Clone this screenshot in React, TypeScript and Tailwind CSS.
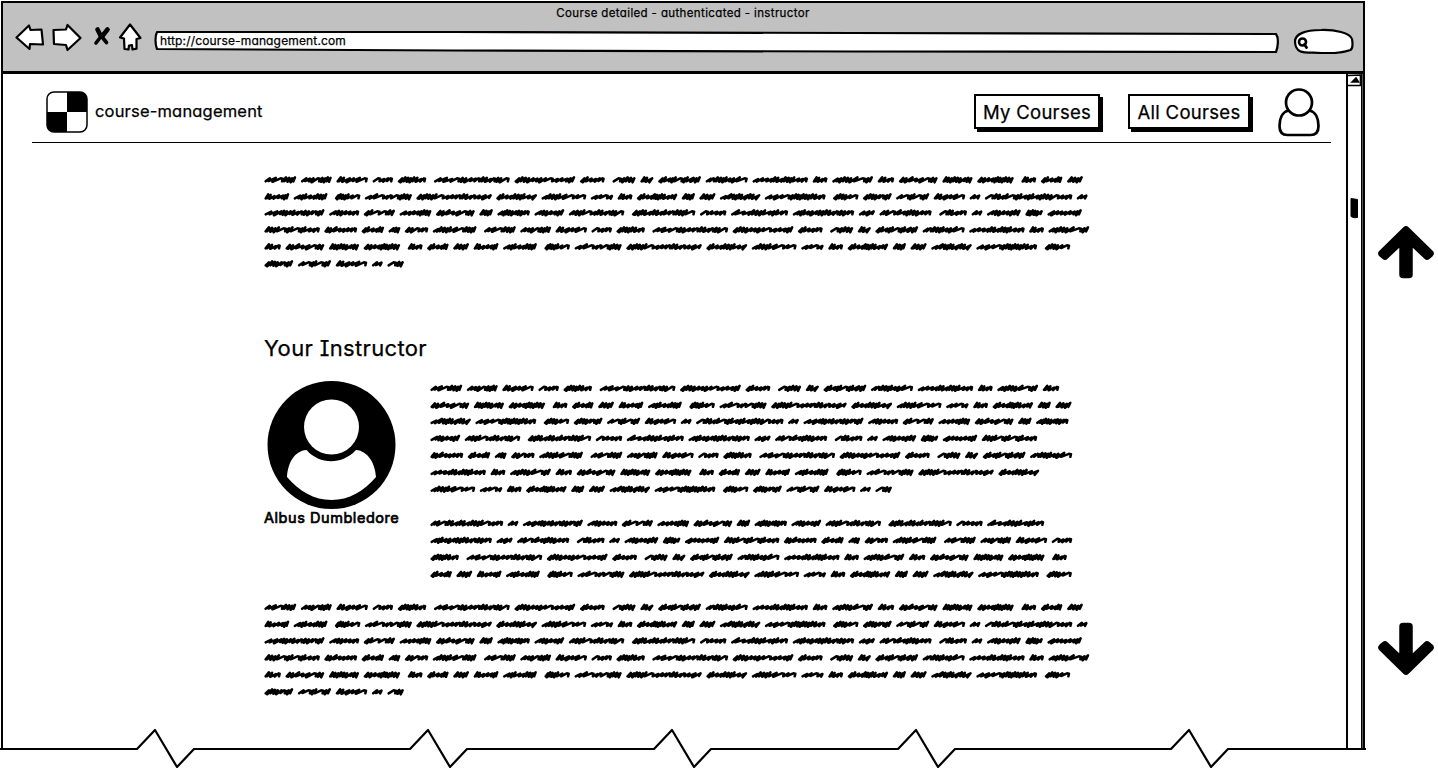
import React from "react";

const HAND = "font-['Inter',sans-serif] [font-feature-settings:'cv11','cv08','ss03'] [-webkit-text-stroke:0.25px_#000]";
const HAND_BOLD = "font-['Inter',sans-serif] [font-feature-settings:'cv11','cv08','ss03'] [-webkit-text-stroke:0.7px_#000]";

/* Word lengths of the scribble face, in thirds of a pixel. */
const WORD: Record<string, number> = {
  lorem: 96, ipsum: 93, dolor: 95, sit: 62, amet: 86, consectetur: 228, adipiscing: 183, elit: 75,
  sed: 70, do: 40, eiusmod: 129, tempor: 127, incididunt: 167, ut: 45, labore: 123, et: 50,
  dolore: 117, magna: 91, aliqua: 110, enim: 65, ad: 48, minim: 75, veniam: 102, quis: 77,
  nostrud: 142, exercitation: 227, ullamco: 123, laboris: 135, nisi: 68, aliquip: 122, ex: 40,
  ea: 49, commodo: 122, consequat: 183, duis: 77, aute: 87, irure: 100, in: 33,
  reprehenderit: 263, re: 50, prehenderit: 219, voluptate: 181, velit: 91, esse: 94, cillum: 96,
  eu: 41, fugiat: 98, nulla: 90, pariatur: 167, excepteur: 191, sint: 80, occaecat: 172,
  cupidatat: 185, non: 49, proident: 157, sunt: 84, culpa: 102, qui: 53, officia: 104,
  deserunt: 167, mollit: 99, anim: 68, id: 36, est: 71, laborum: 132,
};

/* Width and strokes of each letter: s = stroke, d = deep stroke, h = open hump. */
const LETTER: Record<string, [number, string]> = {
  a: [21, "dd"], b: [19, "dd"], c: [16, "s"], d: [20, "dd"], e: [21, "dd"], f: [14, "s"],
  g: [20, "dd"], h: [16, "s"], i: [14, "s"], l: [13, "s"], m: [18, "dd"], n: [16, "s"],
  o: [19, "d"], p: [24, "sd"], q: [23, "ddd"], r: [22, "h"], s: [21, "h"], t: [25, "sh"],
  u: [18, "dd"], v: [18, "s"], x: [18, "dd"],
};

function scribble(word: string, x0: number, y: number) {
  const total = word.split("").reduce((n, c) => n + LETTER[c][0], 0);
  const target = WORD[word] - 8;
  let x = x0 + 4;
  let d = `M${x} ${y + 4}`;
  let k = word.length;
  for (const c of word) {
    const [w, strokes] = LETTER[c];
    const step = ((w / total) * target) / strokes.length;
    for (const s of strokes) {
      k++;
      const j = k % 3;
      if (s === "h") {
        d += `L${x + step * 0.7} ${y - 5}L${x + step} ${y - 4}L${x + step - 2} ${y + 4}`;
      } else if (s === "d") {
        d += `L${x + step} ${y - 8 + j * 1.5}L${x + step * 0.45} ${y + 4 + j * 1.5}`;
      } else {
        d += `L${x + step} ${y - 5 + j}L${x + step * 0.7} ${y + 3 + j}`;
      }
      x += step;
    }
  }
  return d;
}

type Line = [text: string, end: number];

function ScribbleText({ lines, ys, width }: { lines: Line[]; ys: number[]; width: number }) {
  let d = "";
  lines.forEach(([line, end], i) => {
    const words = line.split(" ").map((raw) => {
      const w = raw.replace(/[.,]/g, "");
      return { w, pause: w !== raw ? 9 : 0 };
    });
    const ink = words.reduce((n, { w, pause }) => n + WORD[w] + pause, 0);
    const gap = (end - ink) / (words.length - 1);
    let x = 1;
    for (const { w, pause } of words) {
      d += scribble(w, x, ys[i] * 3);
      x += WORD[w] + gap + pause;
    }
  });
  const h = Math.round(ys[ys.length - 1]) + 8;
  return (
    <svg width={width} height={h} viewBox={`0 0 ${width * 3} ${h * 3}`} className="block shrink-0" aria-hidden="true">
      <path d={d} fill="none" stroke="#000" strokeWidth="7.500" strokeLinecap="round" strokeLinejoin="round" />
    </svg>
  );
}

const WIDE: Line[] = [
  ["lorem ipsum dolor sit amet, consectetur adipiscing elit, sed do eiusmod tempor incididunt ut labore et dolore magna aliqua. ut enim ad", 2456],
  ["minim veniam, quis nostrud exercitation ullamco laboris nisi ut aliquip ex ea commodo consequat. duis aute irure dolor in reprehenderit in", 2470],
  ["voluptate velit esse cillum dolore eu fugiat nulla pariatur. excepteur sint occaecat cupidatat non proident, sunt in culpa qui officia", 2453],
  ["deserunt mollit anim id est laborum. lorem ipsum dolor sit amet, consectetur adipiscing elit, sed do eiusmod tempor incididunt ut labore", 2475],
  ["et dolore magna aliqua. ut enim ad minim veniam, quis nostrud exercitation ullamco laboris nisi ut aliquip ex ea commodo consequat. duis", 2418],
  ["aute irure dolor in re", 419],
];
const NARROW: Line[] = [
  ["lorem ipsum dolor sit amet, consectetur adipiscing elit, sed do eiusmod tempor incididunt ut labore et", 1887],
  ["dolore magna aliqua. ut enim ad minim veniam, quis nostrud exercitation ullamco laboris nisi ut aliquip ex ea", 1924],
  ["commodo consequat. duis aute irure dolor in reprehenderit in voluptate velit esse cillum dolore eu fugiat", 1915],
  ["nulla pariatur. excepteur sint occaecat cupidatat non proident, sunt in culpa qui officia deserunt", 1821],
  ["mollit anim id est laborum. lorem ipsum dolor sit amet, consectetur adipiscing elit, sed do eiusmod tempor", 1926],
  ["incididunt ut labore et dolore magna aliqua. ut enim ad minim veniam, quis nostrud exercitation ullamco", 1827],
  ["laboris nisi ut aliquip ex ea commodo consequat. duis aute irure dolor in re", 1385],
];
const NARROW_2: Line[] = [
  ["prehenderit in voluptate velit esse cillum dolore eu fugiat nulla pariatur. excepteur sint occaecat", 1842],
  ["cupidatat non proident, sunt in culpa qui officia deserunt mollit anim id est laborum. lorem ipsum dolor sit", 1926],
  ["amet, consectetur adipiscing elit, sed do eiusmod tempor incididunt ut labore et dolore magna aliqua. ut", 1910],
  ["enim ad minim veniam, quis nostrud exercitation ullamco laboris nisi ut aliquip ex ea commodo consequat. duis", 1925],
];

function Toolbar() {
  return (
    <header className="flex h-[71px] shrink-0 flex-col border-b-[3px] border-black bg-[#c1c1c1]">
      <div className={`${HAND} pt-[3px] text-center text-[11.500px] leading-[15px] tracking-[0.370px]`}>
        Course detailed - authenticated - instructor
      </div>
      <div className="flex items-start pl-[12px]">
        <svg width="132" height="34" viewBox="15 20.500 132 34" fill="#fff" stroke="#000" strokeWidth="2.2" strokeLinejoin="round" strokeLinecap="round">
          <path d="M16.500 37 29 25l1.500 4.500 11-.5 1.500 15-13-.5-.5 5Z" />
          <path d="M53.500 29.500 66 29l1.500-4.500 13 13L67.500 49.500 66 44.500l-12-1Z" />
          <path d="M97.500 29 100.500 35M107.500 29 102 36" strokeWidth="4.600" />
          <path d="M100 34 106.500 42M102.500 34 96 42.500" strokeWidth="3.600" />
          <path d="M130 24 120 37l4 1 .5 10.500 4 .5.500-4 3-.3.500 4.300 4-.8V38.500l4-1Z" />
        </svg>
        <div className="relative ml-[6px] mt-[9px] h-[23px] w-[1128px]">
          <svg width="1128" height="23" viewBox="0 0 1128 23" className="block">
            <path d="M4 2 300 2 700 3 1123 4c3 4 2 13 0 18L700 21.500 300 20.500 4 19C2 14 2 6 4 2Z" fill="#fff" stroke="#000" strokeWidth="2.200" strokeLinejoin="round" />
          </svg>
          <span className={`${HAND} absolute left-[7px] top-[3px] text-[12px] leading-[16px] tracking-[0.150px]`}>http://course-management.com</span>
        </div>
        <svg width="62" height="26" viewBox="1292 27 62 26" className="ml-[11px] mt-[7px]" fill="none" stroke="#000" strokeWidth="2.200" strokeLinecap="round">
          <path d="M1295 40.500c0-7 9-11.500 26-11.500 14-.5 29 3 31 9 .5 3 1.500 9-1.500 11-7 2.500-19 3.500-29 3-16-1-26 2-26.500-11.500Z" fill="#fff" />
          <circle cx="1302.500" cy="41" r="3.500" strokeWidth="2.600" />
          <path d="M1304.500 43.500 1306.500 46.500" strokeWidth="2.800" />
        </svg>
      </div>
    </header>
  );
}

function NavButton({ label, className }: { label: string; className: string }) {
  return (
    <button className={`${HAND} h-[35px] whitespace-nowrap border-2 border-black bg-white text-[18.500px] leading-[33px] tracking-[0.300px] shadow-[3px_3px_0_#000] ${className}`}>
      {label}
    </button>
  );
}

function SiteHeader() {
  return (
    <div className="ml-[29px] mt-px flex h-[68px] w-[1299px] items-start border-b-[1.500px] border-black">
      <svg width="42" height="42" viewBox="0 0 42 42" className="ml-[14px] mt-[16px]">
        <rect x="1" y="1" width="40" height="40" rx="7" fill="#fff" stroke="#000" strokeWidth="1.500" />
        <path d="M21 1h13a7 7 0 0 1 7 7v13H21ZM1 21h20v20H8a7 7 0 0 1-7-7Z" />
      </svg>
      <span className={`${HAND} ml-[7px] mt-[24px] text-[16.500px] leading-[24px] tracking-[0.180px]`}>course-management</span>
      <div className="ml-auto mr-[11px] flex items-start pt-[13px]">
        <NavButton label="My Courses" className="mr-[28px] mt-[6px] w-[126px]" />
        <NavButton label="All Courses" className="mr-[28px] mt-[6px] w-[122px]" />
        <svg width="42" height="50" viewBox="0 0 42 50" fill="#fff" stroke="#000" strokeWidth="2.700">
          <path d="M10.500 22.500C4 24 1.500 31 1.500 38c0 6 3 9 8 9h23c5 0 8-3 8-9 0-7-2.500-14-9-15.500" />
          <circle cx="21" cy="14.500" r="13" />
        </svg>
      </div>
    </div>
  );
}

function Instructor() {
  return (
    <section className="flex">
      <div className="w-[166px] pt-[2px]">
        <svg width="130" height="130" viewBox="0 0 130 130" className="ml-[2px] block">
          <circle cx="65.500" cy="65" r="64" />
          <circle cx="65.500" cy="47" r="27.500" fill="#fff" />
          <path d="M40.500 70C28 71 22 83 21 97c12 14 27 23 44.500 23S98 111 110 97c-1-14-8-26-20-27-14 15-36 15-49.500 0Z" fill="#fff" />
        </svg>
        <div className={`${HAND_BOLD} mt-[-1px] whitespace-nowrap text-[14.500px] leading-[18px] tracking-[0.550px]`}>Albus Dumbledore</div>
      </div>
      <div className="flex flex-col">
        <ScribbleText lines={NARROW} ys={[10.5, 27.500, 43.500, 60.500, 77.500, 94.500, 111.400]} width={660} />
        <div className="mt-[16px]">
          <ScribbleText lines={NARROW_2} ys={[10.500, 27.500, 44.500, 61.500]} width={660} />
        </div>
      </div>
    </section>
  );
}

function Scrollbar() {
  return (
    <aside className="flex w-[16px] shrink-0 flex-col items-center border-l-2 border-r border-black">
      <svg width="13" height="14" viewBox="0 0 13 14" fill="none" stroke="#000" strokeWidth="1.600">
        <path d="M0 1.500 12.500 1v10.500H0" />
        <path d="M4 8 8 4 10.500 8Z" fill="#000" />
      </svg>
      <svg width="13" height="24" viewBox="0 0 13 24" className="mt-[108px]">
        <path d="M3 2.500 9.500 3.500V21.500Q6 22.500 3 20.500Z" stroke="#000" strokeLinejoin="round" />
      </svg>
    </aside>
  );
}

function BigArrow({ down }: { down?: boolean }) {
  return (
    <svg width="58" height="54" viewBox="0 0 58 54" className={down ? "rotate-180" : ""}>
      <path d="M29 5 53 28.500 50 31 32 14V49.500H26V14L8 31 5 28.500Z" stroke="#000" strokeWidth="7.500" strokeLinejoin="round" />
    </svg>
  );
}

const TORN =
  "M0 749H137L155 730 177 767 194 749H410L428 730 450 767 467 749H654L672 730 694 767 711 749H898L916 730 938 767 955 749H1171L1189 730 1211 767 1228 749H1366";

export default function App() {
  return (
    <div className="relative flex h-[768px] w-[1438px] overflow-hidden bg-white text-black">
      <div className="ml-px mt-px flex h-[748px] w-[1364px] shrink-0 flex-col border-l-2 border-r-2 border-t-2 border-black">
        <Toolbar />
        <div className="flex min-h-0 flex-1">
          <main className="min-w-0 flex-1">
            <SiteHeader />
            <div className="ml-[261px] pt-[27px]">
              <ScribbleText lines={WIDE} ys={[10, 27, 43, 60, 77, 94]} width={830} />
              <h2 className={`${HAND} mt-[61px] text-[22px] leading-[30px] tracking-[0.350px]`}>Your Instructor</h2>
              <div className="mt-[15px]">
                <Instructor />
              </div>
              <div className="mt-[14px]">
                <ScribbleText lines={WIDE} ys={[10.500, 27.500, 44, 61, 78, 95]} width={830} />
              </div>
            </div>
          </main>
          <Scrollbar />
          <div className="w-px shrink-0 bg-[#555]" />
        </div>
      </div>
      <div className="flex flex-1 flex-col items-center pl-[8px] pt-[225px]">
        <BigArrow />
        <div className="h-[343px]" />
        <BigArrow down />
      </div>
      <svg width="1438" height="42" viewBox="0 726 1438 42" className="absolute bottom-0 left-0">
        <path d={`${TORN}V768H0Z`} fill="#fff" />
        <path d={TORN} fill="none" stroke="#000" strokeWidth="2.200" strokeLinejoin="round" />
      </svg>
    </div>
  );
}
